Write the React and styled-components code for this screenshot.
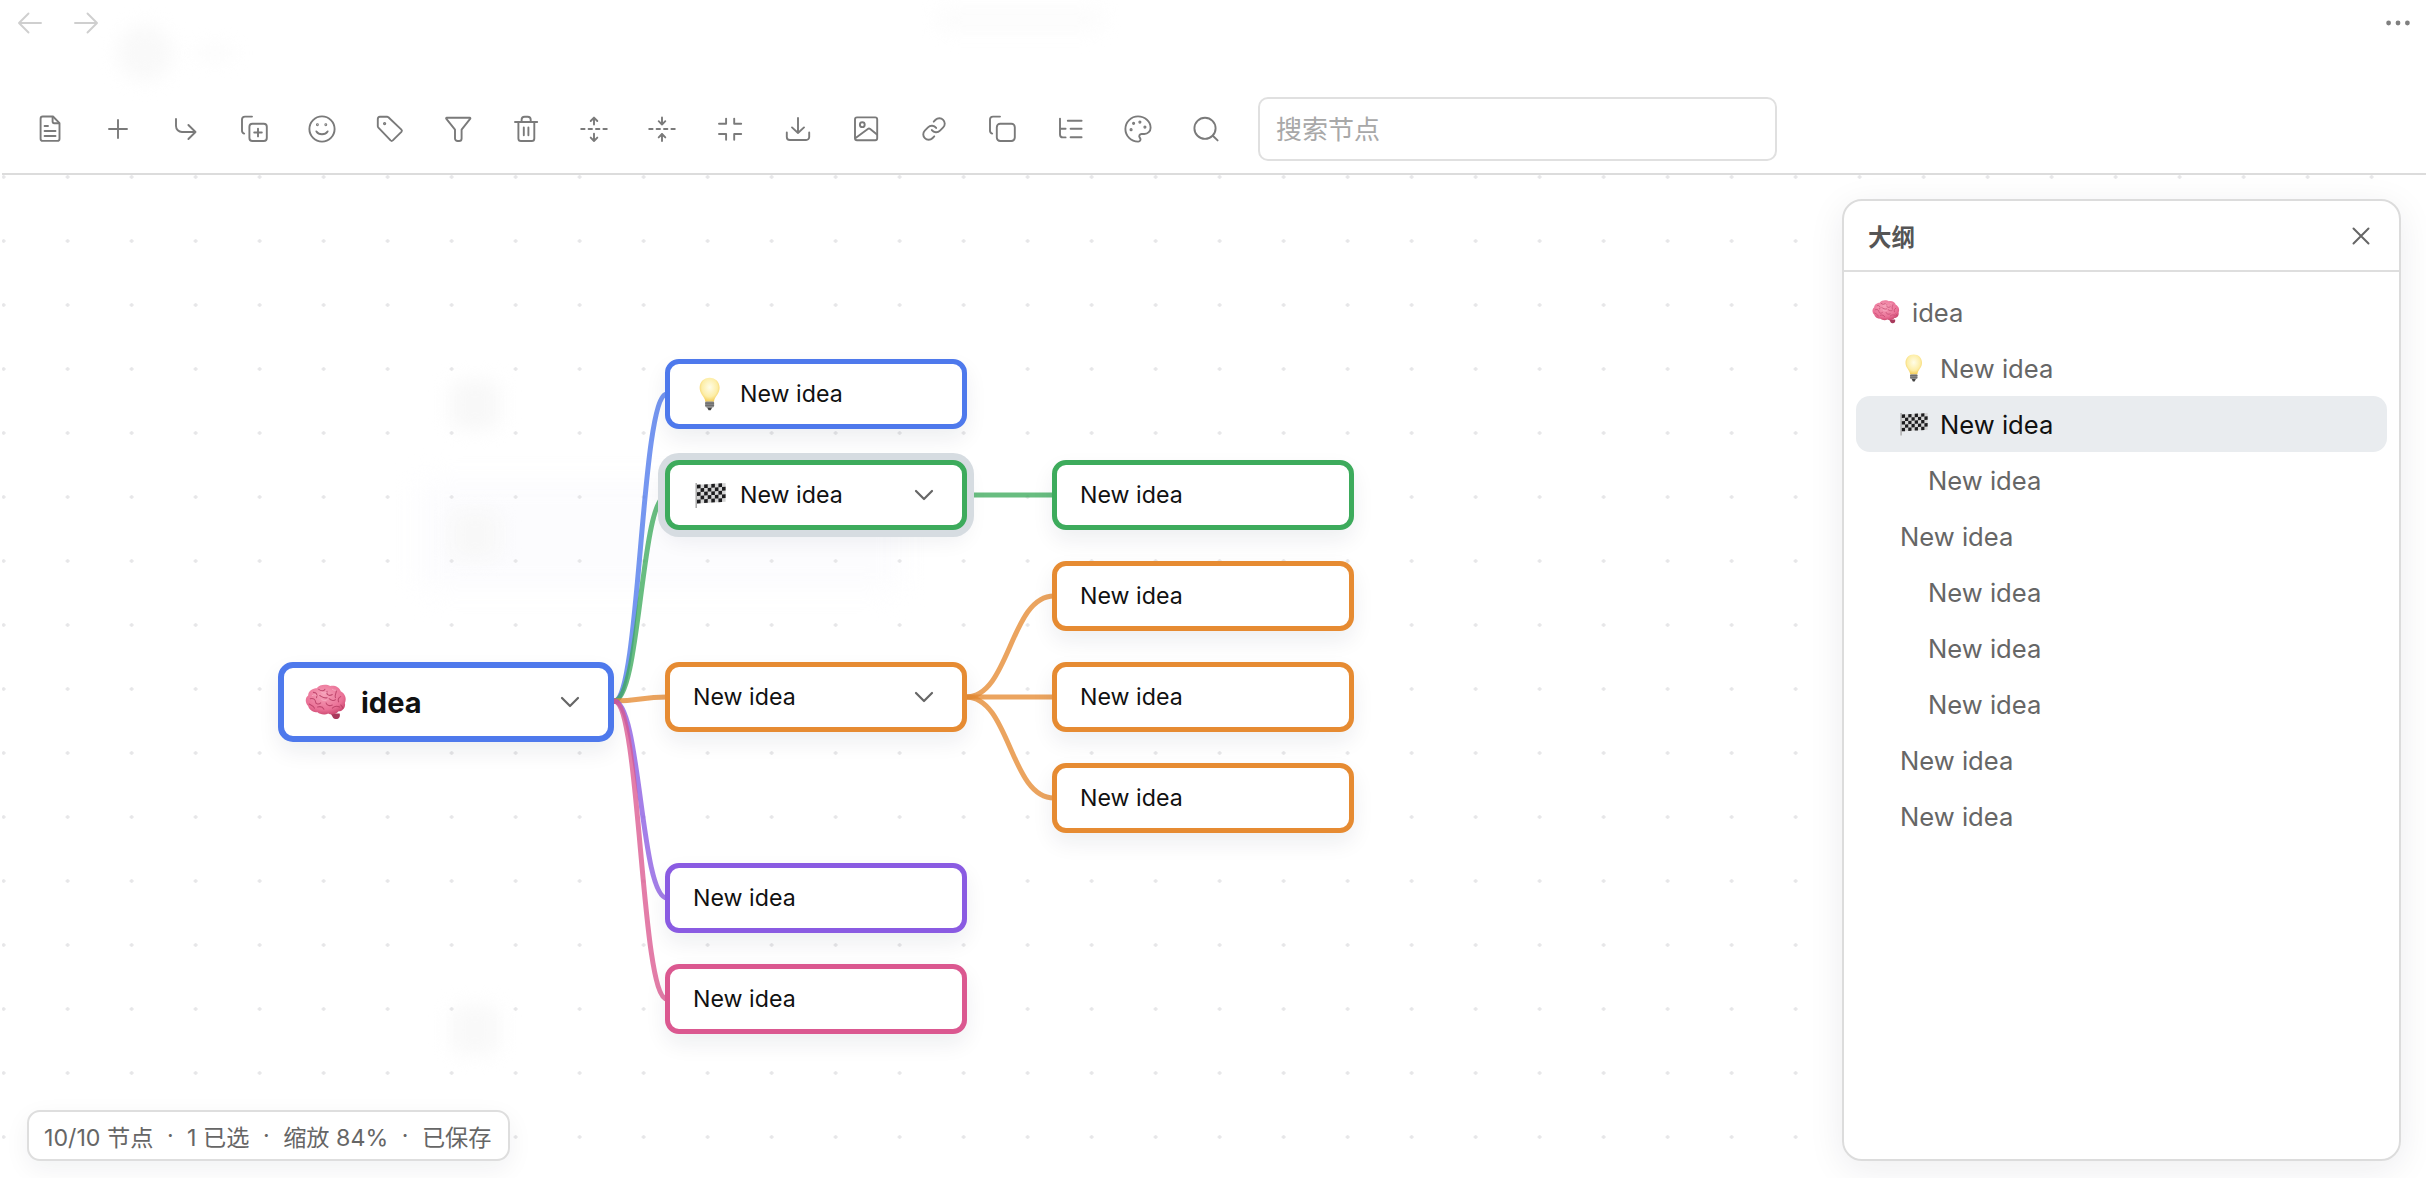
import React from 'react';
import styled, { createGlobalStyle } from 'styled-components';

const Global = createGlobalStyle`
  html, body { margin: 0; padding: 0; background: #fff; overflow: hidden; }
  body { font-family: Inter, "Noto Sans CJK SC", sans-serif; }
  * { box-sizing: border-box; }
`;

const Page = styled.div`
  position: relative;
  width: 2426px;
  height: 1178px;
  display: flex;
  flex-direction: column;
  overflow: hidden;
  background: #fff;
`;
const Ghost = styled.div`
  position: absolute;
  left: ${p => p.$x}px;
  top: ${p => p.$y}px;
  width: ${p => p.$w}px;
  height: ${p => p.$h}px;
  border-radius: ${p => p.$r || 12}px;
  background: ${p => p.$c || '#f6f6f6'};
  filter: blur(${p => p.$b || 9}px);
  pointer-events: none;
`;
const TopBar = styled.header`
  position: relative;
  flex: none;
  height: 85px;
  padding: 0 16px 0 2px;
  display: flex;
  justify-content: space-between;
  align-items: flex-start;
`;
const NavGroup = styled.div`
  display: flex;
`;
const NavButton = styled.button`
  width: 56px;
  height: 46px;
  padding: 0;
  border: 0;
  background: none;
  color: #cfcfcf;
  display: flex;
  align-items: center;
  justify-content: center;
`;
const MoreButton = styled.button`
  width: 24px;
  height: 46px;
  padding: 0;
  border: 0;
  background: none;
  display: flex;
  align-items: center;
  justify-content: center;
`;
const Toolbar = styled.div`
  position: relative;
  flex: none;
  height: 88px;
  padding-left: 16px;
  display: flex;
  align-items: center;
`;
const ToolButton = styled.button`
  width: 68px;
  height: 48px;
  padding: 0;
  border: 0;
  background: none;
  color: #7a7a7a;
  display: flex;
  align-items: center;
  justify-content: center;
`;
const SearchInput = styled.input`
  width: 519px;
  height: 64px;
  margin-left: 18px;
  padding: 0 16px;
  border: 2px solid #e0e0e0;
  border-radius: 10px;
  background: #fff;
  outline: none;
  font-family: inherit;
  font-size: 26px;
  color: #333;
  &::placeholder { color: #a8a8a8; }
`;
const Canvas = styled.main`
  position: relative;
  flex: 1;
  margin-left: 2px;
  border-top: 2px solid #dcdcdc;
  overflow: hidden;
  background-image: radial-gradient(circle, #e6e6e8 1.5px, transparent 2px);
  background-size: 64px 64px;
  background-position: -30.4px -30px;
`;
const Edges = styled.svg`
  position: absolute;
  left: 0;
  top: 0;
  width: 2424px;
  height: 1003px;
  fill: none;
  pointer-events: none;
`;
const Node = styled.div`
  position: absolute;
  left: ${p => p.$x - 2}px;
  top: ${p => p.$y - 175}px;
  width: ${p => (p.$root ? 336 : 302)}px;
  height: ${p => (p.$root ? 80 : 70)}px;
  padding: 0 28px 0 ${p => (p.$root ? 21 : p.$emoji ? 24 : 23)}px;
  display: flex;
  align-items: center;
  gap: 14px;
  background: #fff;
  border: ${p => (p.$root ? 6 : 5)}px solid ${p => p.$color};
  border-radius: ${p => (p.$root ? 15 : 14)}px;
  box-shadow: ${p => (p.$selected ? '0 0 0 7px #d6dce1, ' : '')}0 10px 22px rgba(20, 30, 50, 0.07);
`;
const NodeEmoji = styled.span`
  flex: none;
  width: ${p => (p.$root ? 42 : 32)}px;
  display: flex;
  align-items: center;
  justify-content: center;
`;
const NodeLabel = styled.span`
  flex: 1;
  font-size: ${p => (p.$root ? 29 : 23.2)}px;
  font-weight: ${p => (p.$root ? 700 : 400)};
  color: #111;
  white-space: nowrap;
`;
const Panel = styled.aside`
  position: absolute;
  top: 24px;
  right: 25px;
  bottom: 17px;
  width: 559px;
  display: flex;
  flex-direction: column;
  background: rgba(255, 255, 255, 0.97);
  border: 2px solid #dcdcdc;
  border-radius: 20px;
  box-shadow: 0 8px 36px rgba(20, 30, 50, 0.08);
`;
const PanelHeader = styled.div`
  flex: none;
  height: 71px;
  padding: 0 26px 0 24px;
  display: flex;
  align-items: center;
  justify-content: space-between;
  border-bottom: 2px solid #dedede;
`;
const PanelTitle = styled.h2`
  margin: 0;
  font-size: 23.5px;
  font-weight: 700;
  color: #555;
`;
const CloseButton = styled.button`
  width: 24px;
  height: 24px;
  padding: 0;
  border: 0;
  background: none;
  color: #666;
  display: flex;
  align-items: center;
  justify-content: center;
`;
const OutlineList = styled.div`
  flex: 1;
  padding: 12px 12px;
  display: flex;
  flex-direction: column;
`;
const OutlineRow = styled.div`
  height: 56px;
  padding-left: ${p => 16 + p.$level * 28}px;
  display: flex;
  align-items: center;
  gap: 12px;
  border-radius: 14px;
  font-size: 25.6px;
  color: ${p => (p.$selected ? '#111' : '#666')};
  background: ${p => (p.$selected ? '#e9ecef' : 'transparent')};
`;
const OutlineEmoji = styled.span`
  flex: none;
  width: 28px;
  display: flex;
  align-items: center;
  justify-content: center;
`;
const StatusPill = styled.div`
  position: absolute;
  left: 25px;
  bottom: 17px;
  height: 51px;
  padding: 0 17px 0 15px;
  display: flex;
  align-items: center;
  background: #fff;
  border: 2px solid #dedede;
  border-radius: 13px;
  font-size: 23.2px;
  color: #666;
  white-space: pre;
  box-shadow: 0 8px 26px rgba(20, 30, 50, 0.06);
`;
const StatusDot = styled.span`
  margin: 0 7px;
`;

/* ---------- toolbar drawings ---------- */
const Ico = ({ children, size = 32 }) => (
  <svg width={size} height={size} viewBox="0 0 32 32" fill="none" stroke="currentColor" strokeWidth="1.9" strokeLinecap="round" strokeLinejoin="round">
    {children}
  </svg>
);
const tools = [
  <><path d="M8.8 3.5H19l6.5 6.7V25.7a2.2 2.2 0 0 1-2.2 2.2H8.8a2.2 2.2 0 0 1-2.2-2.2V5.7a2.2 2.2 0 0 1 2.2-2.2Z" /><path d="M18.6 4v4.6a1.6 1.6 0 0 0 1.6 1.6H25" /><path d="M10.6 13H14M10.6 18H21.5M10.6 23H21.5" /></>,
  <path d="M16 7V25M7 16H25" />,
  <path d="M6 6V13a6 6 0 0 0 6 6H25.5M18.4 12 25.5 19 18.4 26" />,
  <><path d="M6.2 20.6C4.8 20.2 4 19.2 4 17.8V6.6a3 3 0 0 1 3-3H14" /><rect x="11.4" y="10.8" width="17.4" height="17.2" rx="3" /><path d="M20 15.6V23.4M16.2 19.5H23.8" /></>,
  <><circle cx="16" cy="16" r="12.6" /><circle cx="11.4" cy="11.8" r="0.5" /><circle cx="19.8" cy="11.8" r="0.5" /><path d="M10.4 18.4C12.8 22.2 19.2 22.2 21.6 18.4" /></>,
  <><path d="M6 3.7H13a2 2 0 0 1 1.4.6L27.4 16.6a1.6 1.6 0 0 1 0 2.2L18.8 27.4a1.6 1.6 0 0 1-2.2 0L4.4 14.6a2 2 0 0 1-.6-1.4V6a2.3 2.3 0 0 1 2.2-2.3Z" /><circle cx="10.6" cy="10.6" r="0.7" /></>,
  <path d="M4.6 4.8H27.9a.5.5 0 0 1 .4.8L19.6 16.6V25.4a2.6 2.6 0 0 1-2.6 2.6H15.6a2.6 2.6 0 0 1-2.6-2.6V16.6L4.2 5.6a.5.5 0 0 1 .4-.8Z" />,
  <><path d="M5 9H27.2M11.6 8.8V6.8a3 3 0 0 1 3-3H17.7a3 3 0 0 1 3 3V8.8" /><path d="M8.4 9V25.4a2.6 2.6 0 0 0 2.6 2.6H21.7a2.6 2.6 0 0 0 2.6-2.6V9" /><path d="M13.8 14.4V22.2M18.4 14.4V22.2" /></>,
  <><path d="M3.2 16H6.6M10.6 16H14M18 16H21.4M25.4 16H28.8" /><path d="M16 11.6V4.6M12.7 8 16 4.6 19.3 8" /><path d="M16 20.8V28M12.7 24.6 16 28 19.3 24.6" /></>,
  <><path d="M3.2 16H6.6M10.6 16H14M18 16H21.4M25.4 16H28.8" /><path d="M16 4.4V11.6M12.7 8.2 16 11.6 19.3 8.2" /><path d="M16 28V21M12.7 24.4 16 21 19.3 24.4" /></>,
  <path d="M5 10.8H12.1V5.6M20.2 5.6V10.8H27.2M5 21H12.1V26.8M27.2 21H20.2V26.8" />,
  <><path d="M16 5V20M10 14.4 16 20 22 14.4" /><path d="M4.8 19.5V24a3 3 0 0 0 3 3H24.2a3 3 0 0 0 3-3V19.5" /></>,
  <><rect x="5" y="4.4" width="22.2" height="22.8" rx="2" /><circle cx="12.3" cy="11.7" r="2.4" /><path d="M5.6 25 17.8 16a2 2 0 0 1 2.4 0L27 21.6" /></>,
  <g transform="translate(16 16) scale(1.08) translate(-12 -12)" strokeWidth="1.75"><path d="M10 13a5 5 0 0 0 7.54.54l3-3a5 5 0 0 0-7.07-7.07l-1.72 1.71" /><path d="M14 11a5 5 0 0 0-7.54-.54l-3 3a5 5 0 0 0 7.07 7.07l1.71-1.71" /></g>,
  <><path d="M6.2 20.6C4.8 20.2 4 19.2 4 17.8V6.6a3 3 0 0 1 3-3H14" /><rect x="10.8" y="10.8" width="18" height="17.2" rx="3.4" /></>,
  <path d="M6 5.6V21.4a3 3 0 0 0 3 3h2.6M6 15.7H11.6M13.8 7.7H27.6M16.6 15.7H27.6M16.6 24.3H27.6" />,
  <g transform="translate(16 16) scale(1.26) translate(-12 -12)" strokeWidth="1.5"><path d="M12 22a1 1 0 0 1 0-20 10 9 0 0 1 10 9 5 5 0 0 1-5 5h-2.25a1.75 1.75 0 0 0-1.4 2.8l.3.4a1.75 1.75 0 0 1-1.4 2.8z" /><circle cx="13.5" cy="6.5" r=".5" fill="currentColor" /><circle cx="17.5" cy="10.5" r=".5" fill="currentColor" /><circle cx="6.5" cy="12.5" r=".5" fill="currentColor" /><circle cx="8.5" cy="7.5" r=".5" fill="currentColor" /></g>,
  <><circle cx="15" cy="15.3" r="10.6" /><path d="M22.8 22.8 27.6 27.4" /></>,
];

/* ---------- emoji drawings ---------- */
const Brain = ({ w = 42 }) => (
  <svg width={w} height={w * 0.85} viewBox="0 0 40 34">
    <defs>
      <radialGradient id="brainFill" cx="45%" cy="35%" r="70%">
        <stop offset="0" stopColor="#f6a0b8" />
        <stop offset="0.7" stopColor="#ea7096" />
        <stop offset="1" stopColor="#c9446c" />
      </radialGradient>
    </defs>
    <path d="M24 28c2 1 2 5 5 5.4s5-2 4-5.4Z" fill="#a83a5c" />
    <path d="M3 21C0 18 0 13 3 11 3 6 8 4 11 4 14 0 21 0 24 2c4-1 9 1 10 5 4 2 6 7 4 11 1 4-2 8-6 8-2 3-7 4-10 2-3 2-8 1-10-1-4 0-8-2-9-6Z" fill="url(#brainFill)" />
    <g fill="none" stroke="#b93f66" strokeWidth="1" strokeLinecap="round" opacity="0.85">
      <path d="M8 8c3 0 4 2 3 5M13 5c2 2 5 2 6 0M21 7c-1 3 2 5 5 3M30 6c0 3-2 4-1 7M34 12c-2 1-3 3-2 5" />
      <path d="M5 14c3-1 5 1 5 3s3 3 5 1M14 11c2 1 4 3 7 2M23 14c2 2 5 2 6 1M4 19c2 1 4 2 5 4M12 22c3-1 5 0 6 2M20 18c1 3 4 3 6 2M26 23c2-2 5-2 7-1M34 20c1 1 2 2 2 3" />
    </g>
    <g fill="none" stroke="#fcc3d3" strokeWidth="0.7" strokeLinecap="round" opacity="0.7">
      <path d="M7 11c2-1 3-1 4 0M16 8c2 1 3 1 5 0M26 5c1 1 2 1 4 1M16 15c2 1 4 1 5 0" />
    </g>
  </svg>
);
const Bulb = ({ h = 34 }) => (
  <svg width={h * 0.625} height={h} viewBox="0 0 20 32">
    <defs>
      <radialGradient id="bulbFill" cx="50%" cy="40%" r="60%">
        <stop offset="0" stopColor="#fffde8" />
        <stop offset="0.65" stopColor="#fdeea8" />
        <stop offset="1" stopColor="#f4cc55" />
      </radialGradient>
    </defs>
    <path d="M10 .6c5.4 0 9.4 4 9.4 9.4 0 5-3.4 7.4-4.8 11-.3.8-.4 1.6-.5 2.4H5.9c-.1-.8-.2-1.6-.5-2.4C4 17.4.6 15 .6 10 .6 4.6 4.6.6 10 .6Z" fill="url(#bulbFill)" />
    <rect x="5.8" y="23" width="8.4" height="5.6" rx="1.2" fill="#8e8e8e" />
    <path d="M5.8 24.6H14.2M5.8 26.6H14.2" stroke="#5b5b5b" strokeWidth="0.8" />
    <path d="M7.6 28.6H12.4L11 31.4H9Z" fill="#444" />
  </svg>
);
const flagCells = [];
for (let r = 0; r < 5; r++) {
  for (let c = 0; c < 8; c++) {
    if ((r + c) % 2 === 0) flagCells.push([c, r]);
  }
}
const Flag = ({ w = 31 }) => (
  <svg width={w} height={w * 0.84} viewBox="0 0 31 26">
    <path d="M1.2 1V26" stroke="#a2a2a2" strokeWidth="1.4" />
    <g transform="matrix(1 -0.06 0 1 2 2.8)">
      <rect x="0" y="0" width="28.6" height="18.6" fill="#d6d6d6" />
      {flagCells.map(([c, r]) => (
        <rect key={`${c}-${r}`} x={c * 3.575} y={r * 3.72} width="3.575" height="3.72" fill="#1d1d1f" />
      ))}
    </g>
  </svg>
);

const Chevron = () => (
  <svg width="20" height="12" viewBox="0 0 20 12" fill="none" stroke="#666" strokeWidth="2.2" strokeLinecap="round" strokeLinejoin="round">
    <path d="M2 2 10 10 18 2" />
  </svg>
);

/* ---------- mind map data ---------- */
const BLUE = '#4e79ec', GREEN = '#3dab5c', ORANGE = '#e68b32', PURPLE = '#8a5be2', PINK = '#db5890';
const rows = [359, 460, 561, 662, 763, 863, 964];
const nodes = [
  { id: 'root', x: 278, y: 662, color: BLUE, root: true, text: 'idea', emoji: <Brain />, chevron: true },
  { id: 'a', x: 665, y: rows[0], color: BLUE, text: 'New idea', emoji: <Bulb /> },
  { id: 'b', x: 665, y: rows[1], color: GREEN, text: 'New idea', emoji: <Flag />, chevron: true, selected: true },
  { id: 'c', x: 665, y: rows[3], color: ORANGE, text: 'New idea', chevron: true },
  { id: 'd', x: 665, y: rows[5], color: PURPLE, text: 'New idea' },
  { id: 'e', x: 665, y: rows[6], color: PINK, text: 'New idea' },
  { id: 'b1', x: 1052, y: rows[1], color: GREEN, text: 'New idea' },
  { id: 'c1', x: 1052, y: rows[2], color: ORANGE, text: 'New idea' },
  { id: 'c2', x: 1052, y: rows[3], color: ORANGE, text: 'New idea' },
  { id: 'c3', x: 1052, y: rows[4], color: ORANGE, text: 'New idea' },
];
const curve = (x1, y1, x2, y2) => {
  const m = (x1 + x2) / 2;
  return `M${x1} ${y1}C${m} ${y1} ${m} ${y2} ${x2} ${y2}`;
};
const edges = [
  [614, 701, 667, 394, BLUE],
  [614, 701, 667, 495, GREEN],
  [614, 701, 667, 697, ORANGE],
  [614, 701, 667, 898, PURPLE],
  [614, 701, 667, 999, PINK],
  [966, 495, 1054, 495, GREEN],
  [966, 697, 1054, 596, ORANGE],
  [966, 697, 1054, 697, ORANGE],
  [966, 697, 1054, 798, ORANGE],
];
const outline = [
  { level: 0, text: 'idea', emoji: <Brain w={30} /> },
  { level: 1, text: 'New idea', emoji: <Bulb h={28} /> },
  { level: 1, text: 'New idea', emoji: <Flag w={28} />, selected: true },
  { level: 2, text: 'New idea' },
  { level: 1, text: 'New idea' },
  { level: 2, text: 'New idea' },
  { level: 2, text: 'New idea' },
  { level: 2, text: 'New idea' },
  { level: 1, text: 'New idea' },
  { level: 1, text: 'New idea' },
];
const ghosts = [
  { x: 117, y: 25, w: 56, h: 56, r: 28, c: '#f9f9f9' },
  { x: 195, y: 46, w: 40, h: 14, c: '#fbfbfb' },
  { x: 935, y: 8, w: 170, h: 24, c: '#fcfcfc' },
  { x: 420, y: 480, w: 480, h: 110, c: '#fcfcfe', b: 14 },
  { x: 450, y: 380, w: 50, h: 50, c: '#f8f8f8' },
  { x: 450, y: 510, w: 50, h: 50, c: '#f8f8f8' },
  { x: 450, y: 1005, w: 50, h: 50, c: '#f9f9f9' },
];

export default function App() {
  return (
    <Page>
      <Global />
      {ghosts.map((g, i) => (
        <Ghost key={i} $x={g.x} $y={g.y} $w={g.w} $h={g.h} $r={g.r} $c={g.c} $b={g.b} />
      ))}
      <TopBar>
        <NavGroup>
          <NavButton aria-label="后退">
            <Ico><path d="M27 16H5.5M14.5 6.5 5 16 14.5 25.5" /></Ico>
          </NavButton>
          <NavButton aria-label="前进">
            <Ico><path d="M5 16H26.5M17.5 6.5 27 16 17.5 25.5" /></Ico>
          </NavButton>
        </NavGroup>
        <MoreButton aria-label="更多">
          <svg width="24" height="6" viewBox="0 0 24 6" fill="#7f7f7f">
            <circle cx="2.6" cy="3" r="2.4" /><circle cx="12" cy="3" r="2.4" /><circle cx="21.4" cy="3" r="2.4" />
          </svg>
        </MoreButton>
      </TopBar>
      <Toolbar>
        {tools.map((t, i) => (
          <ToolButton key={i}><Ico>{t}</Ico></ToolButton>
        ))}
        <SearchInput placeholder="搜索节点" />
      </Toolbar>
      <Canvas>
        <Edges viewBox="2 175 2424 1003">
          {edges.map(([x1, y1, x2, y2, c], i) => (
            <path key={i} d={curve(x1, y1, x2, y2)} stroke={c} strokeWidth="5" strokeOpacity="0.78" strokeLinecap="round" />
          ))}
        </Edges>
        {nodes.map(n => (
          <Node key={n.id} $x={n.x} $y={n.y} $color={n.color} $root={n.root} $selected={n.selected} $emoji={!!n.emoji}>
            {n.emoji && <NodeEmoji $root={n.root}>{n.emoji}</NodeEmoji>}
            <NodeLabel $root={n.root}>{n.text}</NodeLabel>
            {n.chevron && <Chevron />}
          </Node>
        ))}
        <Panel>
          <PanelHeader>
            <PanelTitle>大纲</PanelTitle>
            <CloseButton aria-label="关闭">
              <svg width="18" height="18" viewBox="0 0 18 18" fill="none" stroke="currentColor" strokeWidth="2" strokeLinecap="round">
                <path d="M1.5 1.5 16.5 16.5M16.5 1.5 1.5 16.5" />
              </svg>
            </CloseButton>
          </PanelHeader>
          <OutlineList>
            {outline.map((r, i) => (
              <OutlineRow key={i} $level={r.level} $selected={r.selected}>
                {r.emoji && <OutlineEmoji>{r.emoji}</OutlineEmoji>}
                <span>{r.text}</span>
              </OutlineRow>
            ))}
          </OutlineList>
        </Panel>
        <StatusPill>
          10/10 节点 <StatusDot>·</StatusDot> 1 已选 <StatusDot>·</StatusDot> 缩放 84% <StatusDot>·</StatusDot> 已保存
        </StatusPill>
      </Canvas>
    </Page>
  );
}
